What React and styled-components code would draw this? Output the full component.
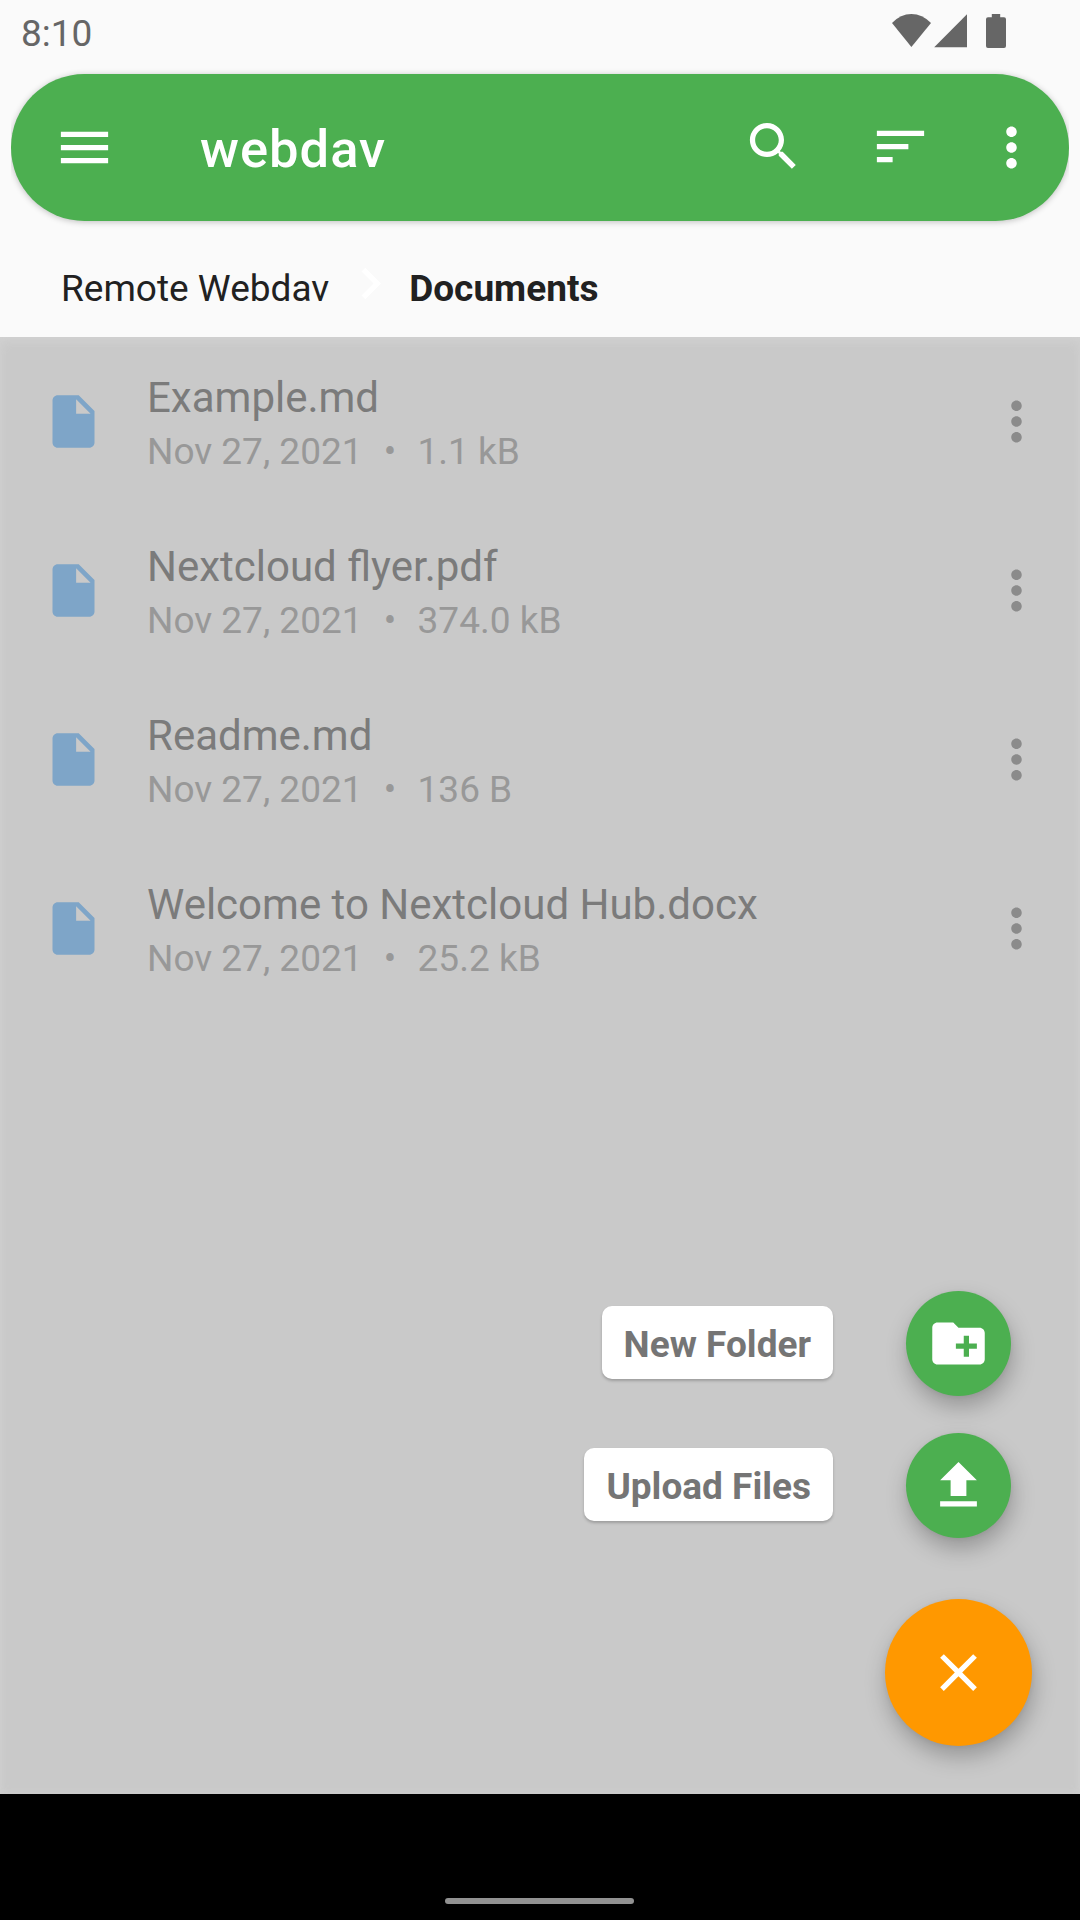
import React from "react";
import styled, { createGlobalStyle } from "styled-components";

const GlobalStyle = createGlobalStyle`
  * { box-sizing: border-box; }
  body { margin: 0; background: #fafafa; }
`;

const Screen = styled.div`
  width: 1080px;
  height: 1920px;
  display: flex;
  flex-direction: column;
  overflow: hidden;
  background: #fafafa;
  color: #212121;
  font-family: Roboto, sans-serif;
  font-size: 37px;
`;

const StatusBar = styled.header`
  height: 74px;
  flex: none;
  display: flex;
  align-items: flex-start;
  justify-content: space-between;
  padding: 0 74px 0 21px;
  color: #666;
`;

const Clock = styled.span`
  line-height: 43px;
  padding-top: 12px;
`;

const StatusIcons = styled.svg`
  width: 116px;
  height: 36px;
  margin-top: 13px;
  fill: #666;
`;

const BarClip = styled.div`
  flex: none;
  margin: -10px 11px 0;
  padding: 10px 0 12px;
  overflow: hidden;
`;

const AppBar = styled.nav`
  height: 147px;
  display: flex;
  align-items: center;
  padding: 0 26px 0 42px;
  border-radius: 74px;
  background: #4caf50;
  color: #fff;
  box-shadow: 0 1px 6px rgba(0, 0, 0, 0.24);
`;

const Title = styled.h1`
  flex: 1;
  margin: 3px 0 0 84px;
  font-size: 52.5px;
  font-weight: 500;
  line-height: 62px;
  letter-spacing: 1px;
`;

const Icon = styled.svg`
  display: block;
  flex: none;
  width: 63px;
  height: 63px;
  fill: currentColor;
`;

const SearchIcon = styled(Icon)`
  margin: 0 64px 2px 0;
`;

const SortIcon = styled(Icon)`
  margin: 0 48px 2px 0;
`;

const Breadcrumbs = styled.div`
  height: 104px;
  flex: none;
  display: flex;
  align-items: center;
  padding: 8px 0 0 61px;
  line-height: 44px;
`;

const Crumb = styled.span`
  font-weight: ${(p) => (p.$current ? 700 : 400)};
`;

const Chevron = styled(Icon)`
  margin: 0 7px 11px 10px;
  color: #fff;
`;

const Content = styled.main`
  height: 1457px;
  flex: none;
  display: flex;
  flex-direction: column;
  justify-content: space-between;
  background: #c9c9c9;
  box-shadow: inset 0 6px 12px -2px #d1d1d1, inset 0 0 10px #cecece;
  overflow: hidden;
`;

const FileList = styled.ul`
  list-style: none;
  margin: 0;
  padding: 0;
`;

const FileRow = styled.li`
  height: 169px;
  display: flex;
  align-items: center;
  padding: 0 32px 0 42px;
`;

const FileIcon = styled(Icon)`
  color: #7ea5c8;
`;

const MoreIcon = styled(Icon)`
  color: ${(p) => p.$color || "currentColor"};
`;

const FileText = styled.div`
  flex: 1;
  padding: 6px 0 0 42px;
`;

const FileName = styled.div`
  font-size: 42px;
  line-height: 54px;
  color: #7b7b7b;
`;

const FileMeta = styled.div`
  display: flex;
  align-items: center;
  line-height: 53px;
  color: #989898;
`;

const Separator = styled.span`
  width: 55px;
  text-align: center;
`;

const SpeedDial = styled.div`
  display: flex;
  flex-direction: column;
  align-items: flex-end;
  padding: 0 48px 48px 0;
`;

const DialAction = styled.div`
  display: flex;
  align-items: center;
  margin: 0 21px 37px 0;
`;

const ActionLabel = styled.span`
  height: 73px;
  display: flex;
  align-items: center;
  margin: 0 73px 2px 0;
  padding: 3px 22px 0;
  border-radius: 10px;
  background: #fff;
  color: #757575;
  font-weight: 700;
  box-shadow: 0 2px 3px rgba(0, 0, 0, 0.22);
`;

const Fab = styled.button`
  display: flex;
  align-items: center;
  justify-content: center;
  width: ${(p) => (p.$main ? 147 : 105)}px;
  height: ${(p) => (p.$main ? 147 : 105)}px;
  margin: ${(p) => (p.$main ? "24px 0 0" : 0)};
  padding: 0;
  border: 0;
  border-radius: 50%;
  color: #fff;
  background: ${(p) => (p.$main ? "#ff9800" : "#4caf50")};
  box-shadow: 2px 11px 22px rgba(0, 0, 0, 0.25), 0 1px 5px rgba(0, 0, 0, 0.06);
`;

const NavigationBar = styled.footer`
  flex: 1;
  display: flex;
  align-items: flex-end;
  justify-content: center;
  padding: 0 1px 16px 0;
  background: #000;
`;

const HomeHandle = styled.div`
  width: 189px;
  height: 6px;
  border-radius: 3px;
  background: #919191;
`;

const paths = {
  menu: "M3 18h18v-2H3v2zm0-5h18v-2H3v2zm0-7v2h18V6H3z",
  search:
    "M15.5 14h-.79l-.28-.27C15.41 12.59 16 11.11 16 9.5 16 5.91 13.09 3 9.5 3S3 5.91 3 9.5 5.91 16 9.5 16c1.61 0 3.09-.59 4.23-1.57l.27.28v.79l5 4.99L20.49 19l-4.99-5zm-6 0C7.01 14 5 11.99 5 9.5S7.01 5 9.5 5 14 7.01 14 9.5 11.99 14 9.5 14z",
  sort: "M3 18h6v-2H3v2zM3 6v2h18V6H3zm0 7h12v-2H3v2z",
  more: "M12 8c1.1 0 2-.9 2-2s-.9-2-2-2-2 .9-2 2 .9 2 2 2zm0 2c-1.1 0-2 .9-2 2s.9 2 2 2 2-.9 2-2-.9-2-2-2zm0 6c-1.1 0-2 .9-2 2s.9 2 2 2 2-.9 2-2-.9-2-2-2z",
  chevron: "M10 6L8.59 7.41 13.17 12l-4.58 4.59L10 18l6-6z",
  file: "M6 2c-1.1 0-1.99.9-1.99 2L4 20c0 1.1.89 2 1.99 2H18c1.1 0 2-.9 2-2V8l-6-6H6zm7 7V3.5L18.5 9H13z",
  newFolder:
    "M20 6h-8l-2-2H4c-1.11 0-1.99.89-1.99 2L2 18c0 1.11.89 2 2 2h16c1.11 0 2-.89 2-2V8c0-1.11-.89-2-2-2zm-1 8h-3v3h-2v-3h-3v-2h3V9h2v3h3v2z",
  upload: "M9 16h6v-6h4l-7-7-7 7h4zm-4 2h14v2H5z",
  close:
    "M19 6.41L17.59 5 12 10.59 6.41 5 5 6.41 10.59 12 5 17.59 6.41 19 12 13.41 17.59 19 19 17.59 13.41 12z",
};

const files = [
  { name: "Example.md", date: "Nov 27, 2021", size: "1.1 kB" },
  { name: "Nextcloud flyer.pdf", date: "Nov 27, 2021", size: "374.0 kB" },
  { name: "Readme.md", date: "Nov 27, 2021", size: "136 B" },
  { name: "Welcome to Nextcloud Hub.docx", date: "Nov 27, 2021", size: "25.2 kB" },
];

const actions = [
  { label: "New Folder", icon: paths.newFolder },
  { label: "Upload Files", icon: paths.upload },
];

function Glyph({ as: Base = Icon, d, ...rest }) {
  return (
    <Base viewBox="0 0 24 24" aria-hidden="true" {...rest}>
      <path d={d} />
    </Base>
  );
}

export default function App() {
  return (
    <Screen>
      <GlobalStyle />
      <StatusBar>
        <Clock>8:10</Clock>
        <StatusIcons viewBox="890 13 116 36">
          <path d="M892 23Q900.5 14 911.4 14T931 23L911.4 47Z" />
          <path d="M934.2 47.2L967 14.2V47.2Z" />
          <path d="M991.8 14H1000.2V17.2H1004Q1006 17.2 1006 19.2V46Q1006 48 1004 48H988Q986 48 986 46V19.2Q986 17.2 988 17.2H991.8Z" />
        </StatusIcons>
      </StatusBar>
      <BarClip>
        <AppBar>
          <Glyph d={paths.menu} />
          <Title>webdav</Title>
          <Glyph as={SearchIcon} d={paths.search} />
          <Glyph as={SortIcon} d={paths.sort} />
          <Glyph as={MoreIcon} d={paths.more} />
        </AppBar>
      </BarClip>
      <Breadcrumbs>
        <Crumb>Remote Webdav</Crumb>
        <Glyph as={Chevron} d={paths.chevron} />
        <Crumb $current>Documents</Crumb>
      </Breadcrumbs>
      <Content>
        <FileList>
          {files.map((f) => (
            <FileRow key={f.name}>
              <Glyph as={FileIcon} d={paths.file} />
              <FileText>
                <FileName>{f.name}</FileName>
                <FileMeta>
                  <span>{f.date}</span>
                  <Separator>•</Separator>
                  <span>{f.size}</span>
                </FileMeta>
              </FileText>
              <Glyph as={MoreIcon} $color="#8b8b8b" d={paths.more} />
            </FileRow>
          ))}
        </FileList>
        <SpeedDial>
          {actions.map((a) => (
            <DialAction key={a.label}>
              <ActionLabel>{a.label}</ActionLabel>
              <Fab aria-label={a.label}>
                <Glyph d={a.icon} />
              </Fab>
            </DialAction>
          ))}
          <Fab $main aria-label="Close">
            <Glyph d={paths.close} />
          </Fab>
        </SpeedDial>
      </Content>
      <NavigationBar>
        <HomeHandle />
      </NavigationBar>
    </Screen>
  );
}
